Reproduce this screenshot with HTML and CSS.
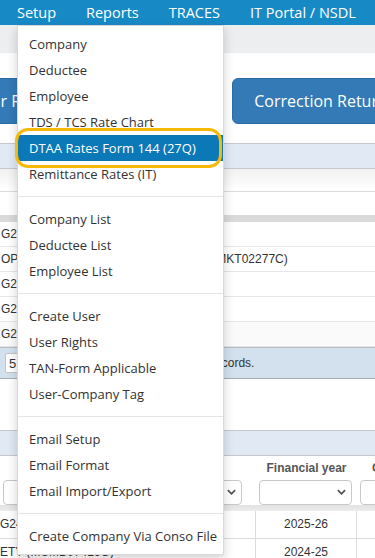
FILE: index.html
```html
<!DOCTYPE html>
<html lang="en">
<head>
    <meta charset="UTF-8">
    <meta name="viewport" content="width=device-width, initial-scale=1.0">
    <title>Setup</title>
    <link rel="stylesheet" href="styles.css">
</head>
<body>
    <header class="topbar">
        <ul class="mainNav">
            <li class="open">Setup
                <ul class="dropMenu">
                    <li>Company</li>
                    <li>Deductee</li>
                    <li>Employee</li>
                    <li>TDS / TCS Rate Chart</li>
                    <li class="active">DTAA Rates Form 144 (27Q)<span class="markRing"></span></li>
                    <li>Remittance Rates (IT)</li>
                    <li class="divider"></li>
                    <li>Company List</li>
                    <li>Deductee List</li>
                    <li>Employee List</li>
                    <li class="divider"></li>
                    <li>Create User</li>
                    <li>User Rights</li>
                    <li>TAN-Form Applicable</li>
                    <li>User-Company Tag</li>
                    <li class="divider"></li>
                    <li>Email Setup</li>
                    <li>Email Format</li>
                    <li>Email Import/Export</li>
                    <li class="divider"></li>
                    <li>Create Company Via Conso File</li>
                </ul>
            </li>
            <li>Reports</li>
            <li>TRACES</li>
            <li>IT Portal / NSDL</li>
        </ul>
    </header>

    <div class="subBar"></div>

    <div class="returnBtns">
        <button class="bigBtn">Regular Return</button>
        <button class="bigBtn">Correction Return</button>
    </div>

    <section class="panel firstPanel">
        <div class="panelHead"></div>
        <div class="toolRow"></div>
        <div class="gapRow"></div>
        <div class="gridHead"></div>
        <div class="gridRow">G24 INFRA PROJECTS LLP</div>
        <div class="gridRow">OPERATIVE HOUSING SOCIETY LTD (MKT02277C)</div>
        <div class="gridRow">G24 TRADING COMPANY</div>
        <div class="gridRow">G24 LOGISTICS PVT LTD</div>
        <div class="gridRow alt">G24 FOODS LIMITED</div>
        <div class="pager">
            <span class="pageSize">5</span>
            <span class="pageInfo">Showing 1 to 5 of 5 records.</span>
        </div>
    </section>

    <section class="panel secondPanel">
        <div class="panelHead"></div>
        <div class="yearGrid">
            <div class="hCell">Deductor Name</div>
            <div class="hCell">Financial year</div>
            <div class="hCell left">Created on</div>

            <div class="fCell firstCol"><div class="selBox"><svg class="chev" viewBox="0 0 10 6"><path d="M1 1l4 4 4-4"/></svg></div></div>
            <div class="fCell"><div class="selBox"><svg class="chev" viewBox="0 0 10 6"><path d="M1 1l4 4 4-4"/></svg></div></div>
            <div class="fCell"><div class="selBox"><svg class="chev" viewBox="0 0 10 6"><path d="M1 1l4 4 4-4"/></svg></div></div>

            <div class="bandCell"></div>
            <div class="bandCell"></div>
            <div class="bandCell"></div>

            <div class="dCell">G24 INFRA PROJECTS LLP</div>
            <div class="dCell mid">2025-26</div>
            <div class="dCell"></div>

            <div class="dCell">ETY (MUMB07416G)</div>
            <div class="dCell mid">2024-25</div>
            <div class="dCell"></div>
        </div>
    </section>
</body>
</html>
```

FILE: styles.css
```css
body {
    margin: 0;
    font-family: "Liberation Sans", Arial, sans-serif;
    font-size: 12px;
    color: #333;
    background: #fff;
    overflow: hidden;
}

/* top navigation */
.topbar {
    background: #178ac6;
    height: 25px;
}

.mainNav {
    list-style: none;
    margin: 0;
    padding: 0 0 0 2px;
    display: flex;
}

.mainNav > li {
    position: relative;
    padding: 0 15px;
    line-height: 25px;
    color: #fff;
    font-family: "Open Sans", sans-serif;
    font-size: 14.5px;
    white-space: nowrap;
}

/* Setup dropdown */
.dropMenu {
    position: absolute;
    top: 25px;
    left: 15px;
    width: 205px;
    list-style: none;
    margin: 0;
    padding: 5px 0;
    background: #fff;
    border: 1px solid rgba(0, 0, 0, 0.15);
    box-shadow: 0 4px 10px rgba(0, 0, 0, 0.18);
    z-index: 10;
}

.dropMenu li {
    position: relative;
    height: 26px;
    line-height: 26px;
    padding: 0 11px;
    font-size: 13px;
    color: #333;
}

.dropMenu li.active {
    background: #0b78b8;
    color: #fff;
}

.dropMenu li.divider {
    height: 1px;
    padding: 0;
    margin: 9px 0;
    background: #e5e5e5;
}

.markRing {
    position: absolute;
    left: -3px;
    top: -7px;
    width: 201px;
    height: 34px;
    border: 3px solid #f7b908;
    border-radius: 13px;
}

.subBar {
    height: 28px;
    background: #eceef0;
}

/* return buttons */
.returnBtns {
    display: flex;
    gap: 137px;
    margin: 25px 0 0 -83px;
}

.bigBtn {
    flex: none;
    width: 178px;
    height: 46px;
    border: 1px solid #2e6da4;
    border-radius: 6px;
    background: #337ab7;
    color: #fff;
    font-family: "Open Sans", sans-serif;
    font-size: 16px;
    white-space: nowrap;
    padding: 0;
}

/* panels */
.firstPanel {
    margin-top: 19px;
}

.secondPanel {
    margin-top: 51px;
}

.panelHead {
    height: 24px;
    background: #e0e9f4;
    border-top: 1px solid #c5c9ce;
    border-bottom: 1px solid #c5c9ce;
}

.toolRow {
    height: 22px;
    background: linear-gradient(#f1f1f1, #fff);
    border-bottom: 1px solid #dcdcdc;
}

.gapRow {
    height: 23px;
}

.gridHead {
    height: 7px;
    background: #dadada;
}

.gridRow {
    height: 24px;
    line-height: 24px;
    padding-left: 1px;
    border-bottom: 1px solid #e6e6e6;
    white-space: nowrap;
}

.gridRow.alt {
    background: #fafafa;
}

.pager {
    height: 30px;
    display: flex;
    align-items: center;
    background: #d3e0ee;
    border-top: 1px solid #b8bcc2;
    border-bottom: 1px solid #a9adb3;
    white-space: nowrap;
}

.pageSize {
    margin-left: 5px;
    width: 22px;
    height: 20px;
    line-height: 20px;
    padding-left: 3px;
    box-sizing: border-box;
    background: #fff;
    border: 1px solid #c4c4c4;
    border-radius: 2px;
    font-size: 13px;
}

.pageInfo {
    margin-left: 78px;
}

/* year grid */
.yearGrid {
    display: grid;
    grid-template-columns: 256px 101px 1fr;
}

.hCell {
    height: 24px;
    line-height: 24px;
    text-align: center;
    font-weight: bold;
    color: #555;
    white-space: nowrap;
}

.hCell.left {
    text-align: left;
    padding-left: 15px;
}

.fCell {
    height: 25px;
    padding: 0 5px 0 3px;
}

.fCell.firstCol {
    padding-right: 14px;
}

.selBox {
    position: relative;
    height: 23px;
    border: 1px solid #c8c8c8;
    border-radius: 4px;
    background: #fff;
}

.chev {
    position: absolute;
    right: 5px;
    top: 8px;
    width: 9px;
    height: 6px;
    fill: none;
    stroke: #555;
    stroke-width: 2;
}

.bandCell {
    height: 6px;
    background: linear-gradient(#e2e2e2, #ececec);
}

.dCell {
    height: 27px;
    line-height: 27px;
    border-bottom: 1px solid #dcdcdc;
    border-right: 1px solid #dcdcdc;
    white-space: nowrap;
    overflow: hidden;
}

.dCell.mid {
    text-align: center;
}
```
